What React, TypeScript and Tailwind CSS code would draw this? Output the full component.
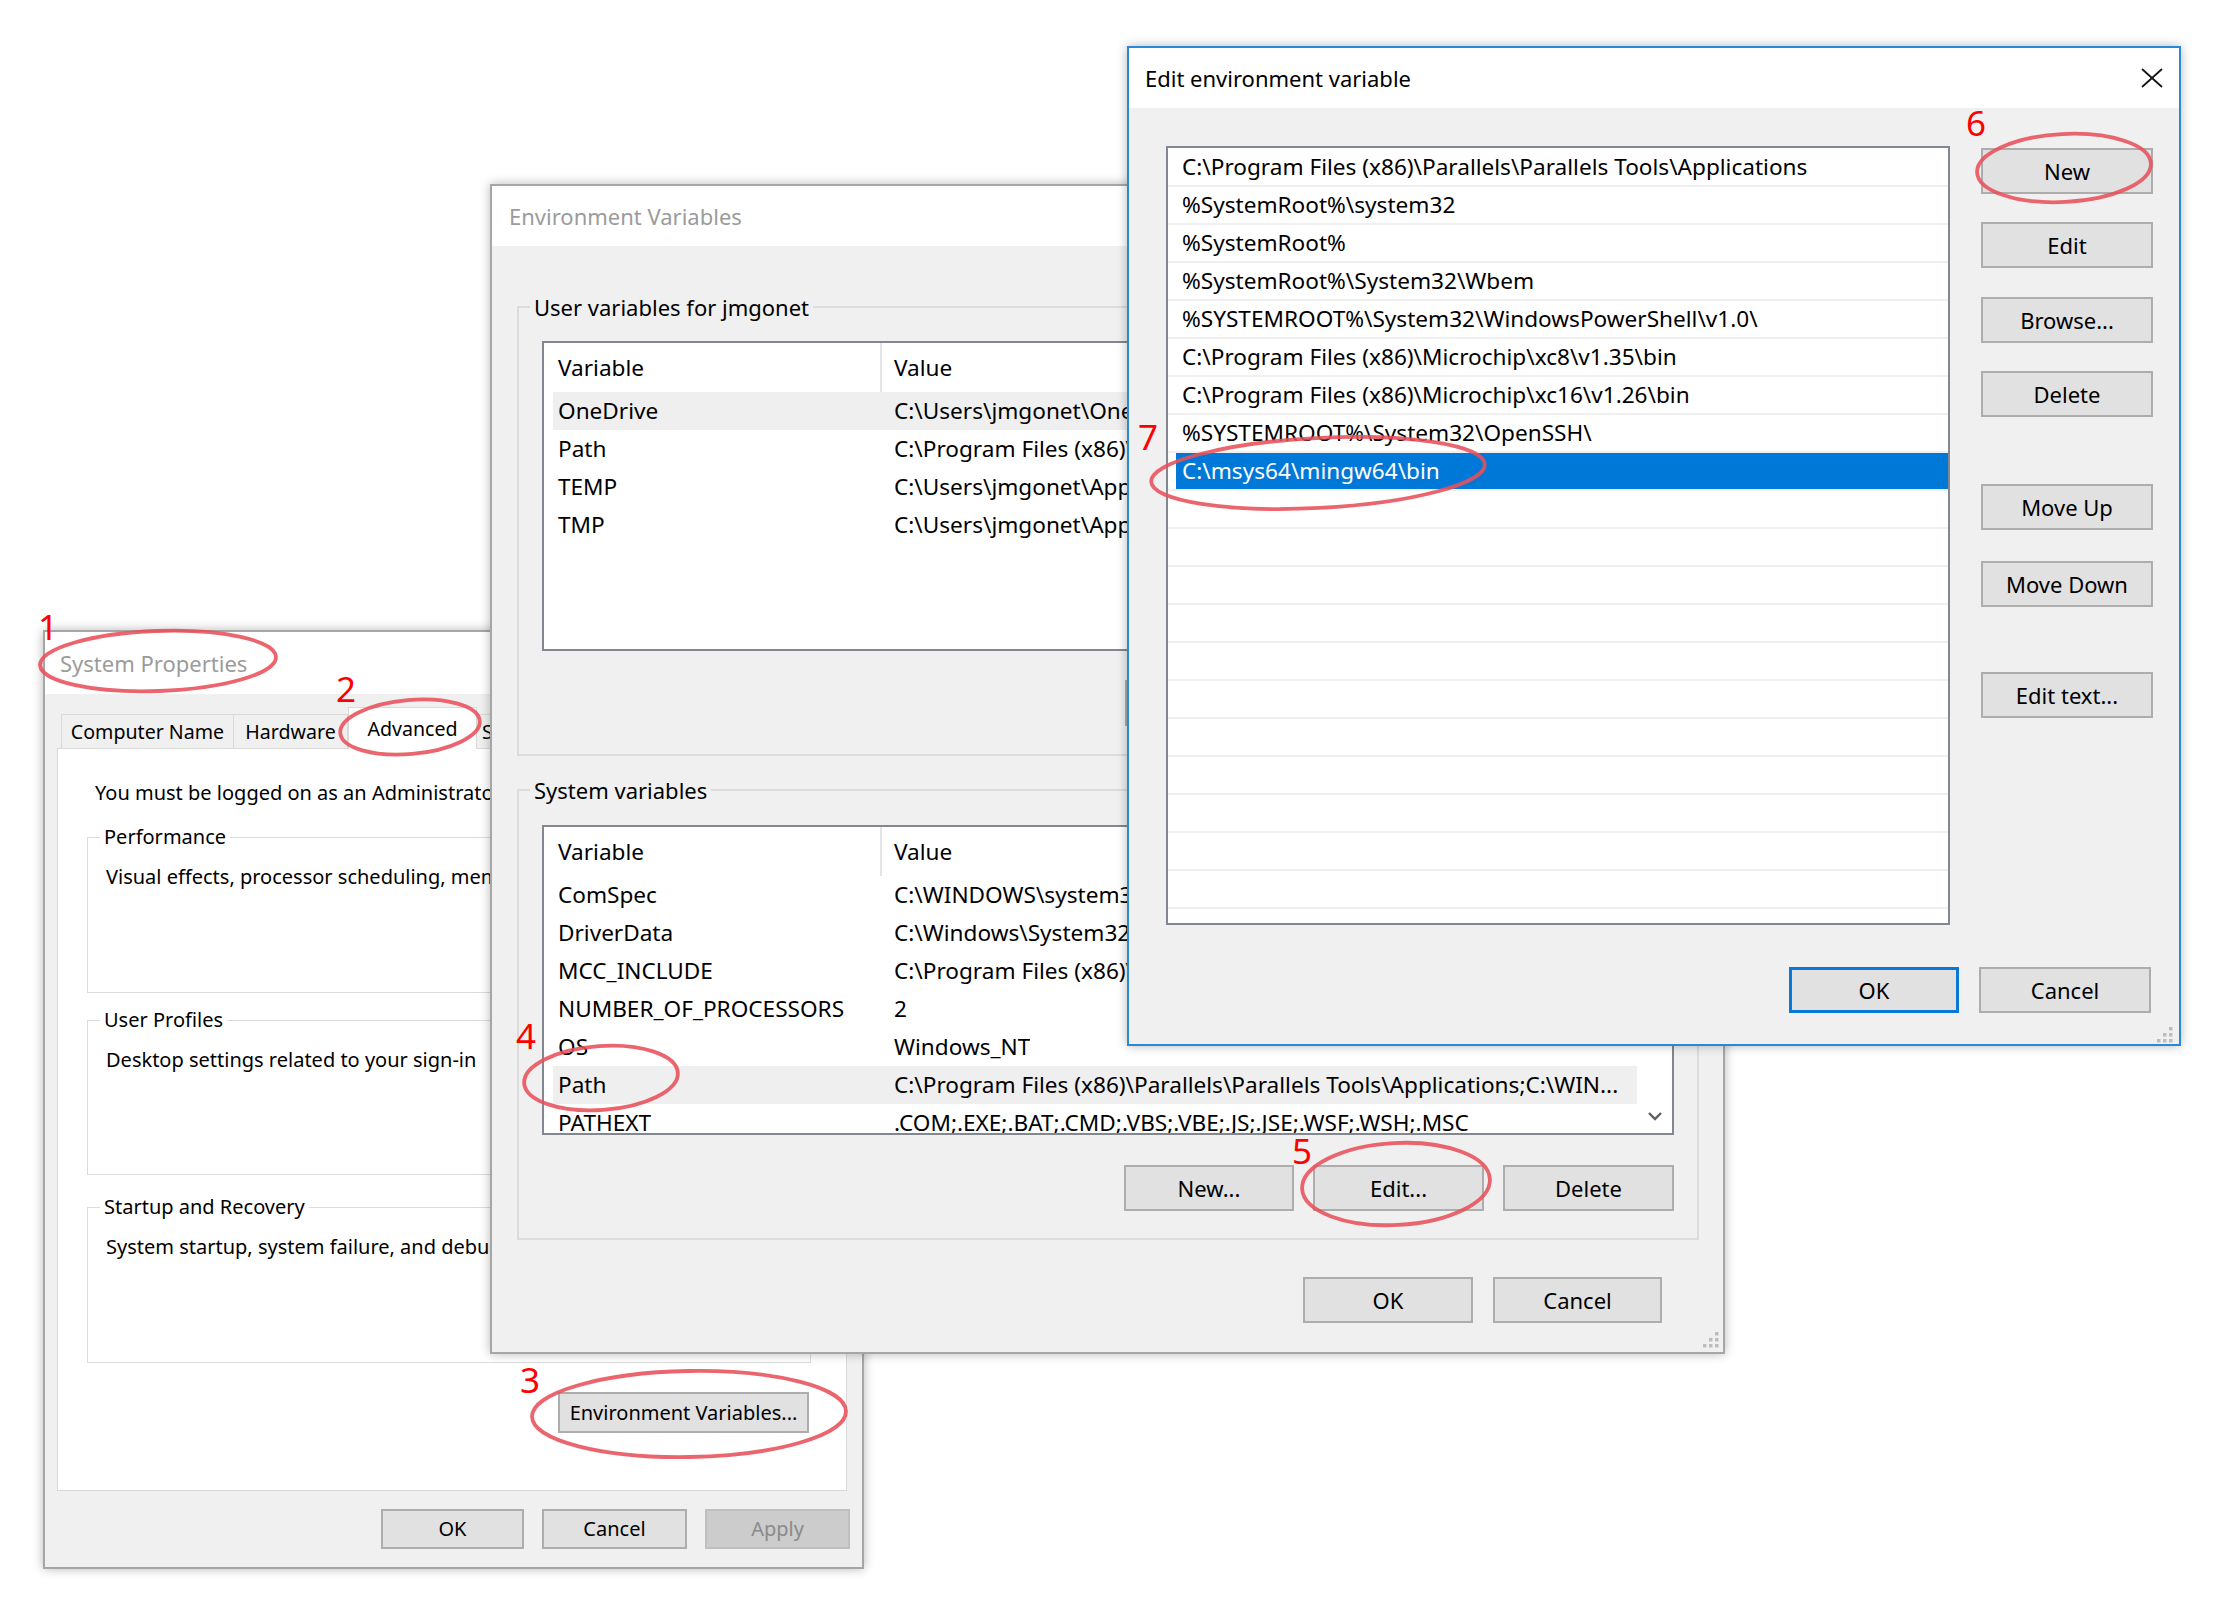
import React from "react";

type Row = { name: string; value: string; hl?: boolean };

function Btn({
  children,
  className = "",
  kind = "normal",
}: {
  children: React.ReactNode;
  className?: string;
  kind?: "normal" | "focus" | "disabled";
}) {
  const look =
    kind === "focus"
      ? "bg-[#e1e1e1] border-[3px] border-[#0a78d6] text-black"
      : kind === "disabled"
      ? "bg-[#cccccc] border-2 border-[#bfbfbf] text-[#8a8a8a]"
      : "bg-[#e1e1e1] border-2 border-[#adadad] text-black";
  return (
    <div className={`flex shrink-0 items-center justify-center whitespace-nowrap ${look} ${className}`}>
      {children}
    </div>
  );
}

function Grip({ className = "" }: { className?: string }) {
  return (
    <svg width="18" height="18" viewBox="0 0 18 18" className={className}>
      {[
        [14, 2],
        [8, 8],
        [14, 8],
        [2, 14],
        [8, 14],
        [14, 14],
      ].map(([x, y], i) => (
        <rect key={i} x={x} y={y} width="3.5" height="3.5" fill="#bdbdbd" />
      ))}
    </svg>
  );
}

function VarList({ rows, scroll = false }: { rows: Row[]; scroll?: boolean }) {
  return (
    <div className="flex h-[310px] flex-col overflow-hidden border-2 border-[#828790] bg-white text-[22.6px]">
      <div className="flex h-[49px] shrink-0">
        <div className="flex w-[338px] shrink-0 items-center border-r-2 border-[#e5e5e5] pl-[14px]">Variable</div>
        <div className="flex items-center pl-[12px]">Value</div>
      </div>
      <div className="flex min-h-0 flex-1">
        <div className="min-w-0 flex-1 overflow-hidden pl-[9px]">
          {rows.map((r) => (
            <div
              key={r.name}
              className={`flex h-[38px] items-center whitespace-nowrap ${r.hl ? "bg-[#efefef]" : ""}`}
            >
              <div className="w-[341px] shrink-0 pl-[5px]">{r.name}</div>
              <div className="overflow-hidden">{r.value}</div>
            </div>
          ))}
        </div>
        {scroll && (
          <div className="flex w-[35px] shrink-0 flex-col items-center justify-end pb-[12px]">
            <svg width="14" height="9" viewBox="0 0 14 9">
              <polyline points="1,1 7,7 13,1" fill="none" stroke="#5f5f5f" strokeWidth="2.4" />
            </svg>
          </div>
        )}
      </div>
    </div>
  );
}

const userRows: Row[] = [
  { name: "OneDrive", value: "C:\\Users\\jmgonet\\OneDrive", hl: true },
  { name: "Path", value: "C:\\Program Files (x86)\\Parallels\\Parallels Tools\\Applications" },
  { name: "TEMP", value: "C:\\Users\\jmgonet\\AppData\\Local\\Temp" },
  { name: "TMP", value: "C:\\Users\\jmgonet\\AppData\\Local\\Temp" },
];

const sysRows: Row[] = [
  { name: "ComSpec", value: "C:\\WINDOWS\\system32\\cmd.exe" },
  { name: "DriverData", value: "C:\\Windows\\System32\\Drivers\\DriverData" },
  { name: "MCC_INCLUDE", value: "C:\\Program Files (x86)\\Microchip\\mplabc18\\v3.47\\h" },
  { name: "NUMBER_OF_PROCESSORS", value: "2" },
  { name: "OS", value: "Windows_NT" },
  {
    name: "Path",
    value: "C:\\Program Files (x86)\\Parallels\\Parallels Tools\\Applications;C:\\WIN...",
    hl: true,
  },
  { name: "PATHEXT", value: ".COM;.EXE;.BAT;.CMD;.VBS;.VBE;.JS;.JSE;.WSF;.WSH;.MSC" },
];

const pathEntries = [
  "C:\\Program Files (x86)\\Parallels\\Parallels Tools\\Applications",
  "%SystemRoot%\\system32",
  "%SystemRoot%",
  "%SystemRoot%\\System32\\Wbem",
  "%SYSTEMROOT%\\System32\\WindowsPowerShell\\v1.0\\",
  "C:\\Program Files (x86)\\Microchip\\xc8\\v1.35\\bin",
  "C:\\Program Files (x86)\\Microchip\\xc16\\v1.26\\bin",
  "%SYSTEMROOT%\\System32\\OpenSSH\\",
  "C:\\msys64\\mingw64\\bin",
];

function SystemProperties() {
  const groups = [
    {
      label: "Performance",
      text: "Visual effects, processor scheduling, memory usage, and virtual memory",
      cls: "mt-[16px] h-[170px]",
    },
    { label: "User Profiles", text: "Desktop settings related to your sign-in", cls: "mt-[13px] h-[169px]" },
    {
      label: "Startup and Recovery",
      text: "System startup, system failure, and debugging information",
      cls: "mt-[18px] h-[170px]",
    },
  ];
  return (
    <div className="absolute left-[43px] top-[630px] flex h-[939px] w-[821px] flex-col border-2 border-[#a6a6a6] bg-[#f0f0f0] text-[20px] leading-[28px] text-black shadow-[0_0_10px_rgba(0,0,0,0.28)]">
      <div className="flex h-[62px] shrink-0 items-center bg-white pl-[15px] text-[22px] text-[#9b9b9b]">
        System Properties
      </div>
      <div className="flex flex-1 flex-col pl-[12px] pr-[15px]">
        <div className="ml-[4px] mt-[13px] flex h-[41px] items-end text-[19.6px]">
          <div className="flex h-[34px] w-[173px] items-center justify-center border border-b-0 border-[#d9d9d9] bg-[#f0f0f0]">
            Computer Name
          </div>
          <div className="flex h-[34px] w-[114px] items-center justify-center border border-b-0 border-l-0 border-[#d9d9d9] bg-[#f0f0f0]">
            Hardware
          </div>
          <div className="relative z-10 -mb-px flex h-[42px] w-[129px] items-center justify-center border border-b-0 border-[#d9d9d9] bg-white">
            Advanced
          </div>
          <div className="flex h-[34px] w-[190px] items-center border border-b-0 border-l-0 border-[#d9d9d9] bg-[#f0f0f0] pl-[5px]">
            System Protection
          </div>
          <div className="flex h-[34px] w-[100px] items-center justify-center border border-b-0 border-l-0 border-[#d9d9d9] bg-[#f0f0f0]">
            Remote
          </div>
        </div>
        <div className="flex h-[743px] flex-col border border-[#d9d9d9] bg-white">
          <div className="pl-[37px] pt-[30px] whitespace-nowrap">
            You must be logged on as an Administrator to make most of these changes.
          </div>
          <div className="ml-[29px] mr-[35px] flex flex-col">
            {groups.map((g) => (
              <fieldset
                key={g.label}
                className={`flex flex-col border border-[#dcdcdc] pb-[10px] pl-[18px] pr-[12px] ${g.cls}`}
              >
                <legend className="ml-[-6px] px-[4px] leading-[28px]">{g.label}</legend>
                <div className="mt-[12px] whitespace-nowrap">{g.text}</div>
                <div className="mt-auto flex justify-end">
                  <Btn className="h-[40px] w-[145px]">Settings...</Btn>
                </div>
              </fieldset>
            ))}
          </div>
          <div className="mr-[37px] mt-[29px] flex justify-end">
            <Btn className="h-[41px] w-[251px]">Environment Variables...</Btn>
          </div>
        </div>
        <div className="mr-[-3px] mt-[18px] flex justify-end gap-[18px]">
          <Btn className="h-[40px] w-[143px]">OK</Btn>
          <Btn className="h-[40px] w-[145px]">Cancel</Btn>
          <Btn className="h-[40px] w-[145px]" kind="disabled">
            Apply
          </Btn>
        </div>
      </div>
    </div>
  );
}

function EnvironmentVariables() {
  return (
    <div className="absolute left-[490px] top-[184px] flex h-[1170px] w-[1235px] flex-col border-2 border-[#a6a6a6] bg-[#f0f0f0] text-[22px] text-black shadow-[0_0_10px_rgba(0,0,0,0.28)]">
      <div className="flex h-[60px] shrink-0 items-center bg-white pl-[17px] text-[#9b9b9b]">Environment Variables</div>
      <div className="flex flex-1 flex-col pl-[25px] pr-[24px]">
        <fieldset className="mt-[46px] flex flex-col border-2 border-[#dcdcdc] px-[23px] pb-[28px] pt-[19px]">
          <legend className="ml-[-12px] px-[4px] leading-[30px]">User variables for jmgonet</legend>
          <VarList rows={userRows} />
          <div className="mt-[29px] flex justify-end gap-[19px]">
            <Btn className="h-[46px] w-[170px]">New...</Btn>
            <Btn className="h-[46px] w-[170px]">Edit...</Btn>
            <Btn className="h-[46px] w-[171px]">Delete</Btn>
          </div>
        </fieldset>
        <fieldset className="mt-[19px] flex flex-col border-2 border-[#dcdcdc] px-[23px] pb-[27px] pt-[20px]">
          <legend className="ml-[-12px] px-[4px] leading-[30px]">System variables</legend>
          <VarList rows={sysRows} scroll />
          <div className="mt-[30px] flex justify-end gap-[19px]">
            <Btn className="h-[46px] w-[170px]">New...</Btn>
            <Btn className="h-[46px] w-[171px]">Edit...</Btn>
            <Btn className="h-[46px] w-[171px]">Delete</Btn>
          </div>
        </fieldset>
        <div className="mr-[37px] mt-[37px] flex justify-end gap-[20px]">
          <Btn className="h-[46px] w-[170px]">OK</Btn>
          <Btn className="h-[46px] w-[169px]">Cancel</Btn>
        </div>
      </div>
      <Grip className="absolute bottom-[4px] right-[4px]" />
    </div>
  );
}

function EditEnvironmentVariable() {
  const empty = Array.from({ length: 12 }, (_, i) => i);
  return (
    <div className="absolute left-[1127px] top-[46px] flex h-[1000px] w-[1054px] flex-col border-2 border-[#2b88d8] bg-[#f0f0f0] text-[22px] text-black shadow-[0_0_10px_rgba(0,0,0,0.28)]">
      <div className="flex h-[60px] shrink-0 items-center justify-between bg-white pl-[16px] pr-[16px]">
        <span>Edit environment variable</span>
        <svg width="22" height="20" viewBox="0 0 22 20">
          <line x1="1" y1="1" x2="21" y2="19" stroke="#111" strokeWidth="1.7" />
          <line x1="21" y1="1" x2="1" y2="19" stroke="#111" strokeWidth="1.7" />
        </svg>
      </div>
      <div className="flex flex-1 flex-col pl-[37px] pr-[26px] pt-[38px]">
        <div className="flex">
          <div className="h-[779px] w-[784px] shrink-0 overflow-hidden border-2 border-[#828790] bg-white pt-[1px] text-[22.6px]">
            {pathEntries.map((p, i) => {
              const sel = i === pathEntries.length - 1;
              return (
                <div key={p} className="h-[38px] border-b-2 border-[#f0f0f0] pl-[8px]">
                  <div
                    className={`flex h-full items-center whitespace-nowrap px-[6px] ${
                      sel ? "bg-[#0078d7] text-white" : ""
                    }`}
                  >
                    {p}
                  </div>
                </div>
              );
            })}
            {empty.map((i) => (
              <div key={i} className="h-[38px] border-b-2 border-[#f0f0f0]" />
            ))}
          </div>
          <div className="ml-[31px] flex w-[172px] flex-col">
            <Btn className="mt-[2px] h-[46px] w-[172px]">New</Btn>
            <Btn className="mt-[28px] h-[46px] w-[172px]">Edit</Btn>
            <Btn className="mt-[29px] h-[46px] w-[172px]">Browse...</Btn>
            <Btn className="mt-[28px] h-[46px] w-[172px]">Delete</Btn>
            <Btn className="mt-[67px] h-[46px] w-[172px]">Move Up</Btn>
            <Btn className="mt-[31px] h-[46px] w-[172px]">Move Down</Btn>
            <Btn className="mt-[65px] h-[46px] w-[172px]">Edit text...</Btn>
          </div>
        </div>
        <div className="mr-[2px] mt-[42px] flex justify-end gap-[20px]">
          <Btn className="h-[46px] w-[170px]" kind="focus">
            OK
          </Btn>
          <Btn className="h-[46px] w-[172px]">Cancel</Btn>
        </div>
      </div>
      <Grip className="absolute bottom-[1px] right-[6px]" />
    </div>
  );
}

function Annotations() {
  const ellipses = [
    { cx: 158, cy: 661, rx: 118, ry: 30, r: -2 },
    { cx: 410, cy: 727, rx: 70, ry: 27, r: -5 },
    { cx: 689, cy: 1414, rx: 157, ry: 43, r: -1 },
    { cx: 601, cy: 1078, rx: 77, ry: 32, r: -4 },
    { cx: 1396, cy: 1184, rx: 94, ry: 41, r: -3 },
    { cx: 2064, cy: 168, rx: 87, ry: 34, r: -3 },
    { cx: 1318, cy: 473, rx: 167, ry: 35, r: -3 },
  ];
  const nums = [
    { t: "1", x: 48, y: 640 },
    { t: "2", x: 346, y: 702 },
    { t: "3", x: 530, y: 1393 },
    { t: "4", x: 526, y: 1049 },
    { t: "5", x: 1302, y: 1164 },
    { t: "6", x: 1976, y: 136 },
    { t: "7", x: 1148, y: 450 },
  ];
  return (
    <svg
      className="pointer-events-none absolute left-0 top-0 z-50"
      width="2216"
      height="1600"
      viewBox="0 0 2216 1600"
    >
      {ellipses.map((e, i) => (
        <ellipse
          key={i}
          cx={e.cx}
          cy={e.cy}
          rx={e.rx}
          ry={e.ry}
          transform={`rotate(${e.r} ${e.cx} ${e.cy})`}
          fill="none"
          stroke="#e8505a"
          strokeOpacity="0.88"
          strokeWidth="3.8"
        />
      ))}
      {nums.map((n) => (
        <text
          key={n.t}
          x={n.x}
          y={n.y}
          textAnchor="middle"
          fontFamily="'Noto Sans', sans-serif"
          fontSize="35"
          fill="#ff0000"
        >
          {n.t}
        </text>
      ))}
    </svg>
  );
}

export default function App() {
  return (
    <div className="relative h-[1600px] w-[2216px] overflow-hidden bg-white font-['Noto_Sans',sans-serif]">
      <SystemProperties />
      <EnvironmentVariables />
      <EditEnvironmentVariable />
      <Annotations />
    </div>
  );
}
